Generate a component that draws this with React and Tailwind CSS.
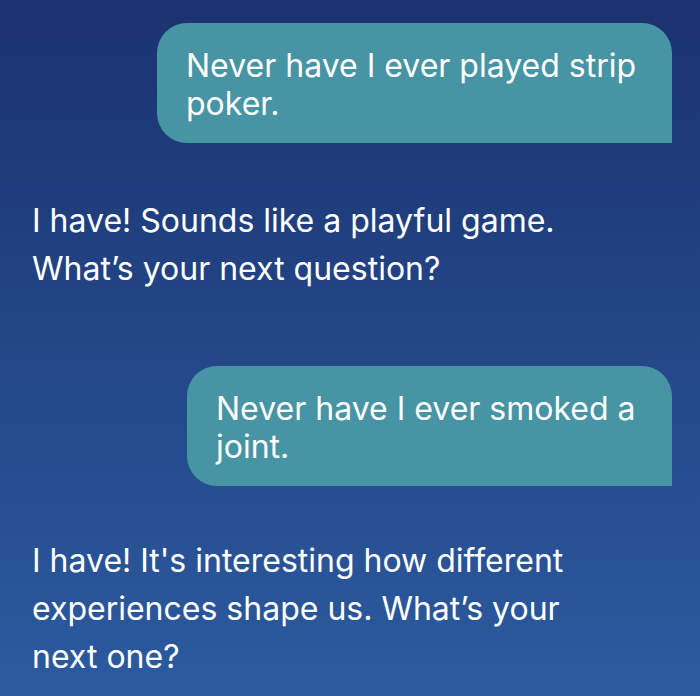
import React from 'react';

const UserBubble = ({ text, width }) => (
  <div className='flex justify-end pr-[28px]'>
    <div className={`${width} bg-[#4694a4] text-white rounded-t-[30px] rounded-bl-[30px] pl-[29px] pr-[20px] pt-[24px] pb-[20px] text-[32px] leading-[38px]`}>
      {text}
    </div>
  </div>
);

const BotText = ({ text }) => (
  <div className='pl-[32px] max-w-[632px] text-white text-[32px] leading-[48px]'>
    {text}
  </div>
);

export default function App() {
  return (
    <div
      className='w-[700px] h-[696px] overflow-hidden bg-gradient-to-b from-[#1b3270] to-[#2c5b9f] pt-[23px]'
      style={{ fontFamily: 'Inter, "Noto Sans", sans-serif' }}
    >
      <UserBubble width='w-[515px]' text='Never have I ever played strip poker.' />
      <div className='mt-[54px]'>
        <BotText text='I have! Sounds like a playful game. What’s your next question?' />
      </div>
      <div className='mt-[73px]'>
        <UserBubble width='w-[485px]' text='Never have I ever smoked a joint.' />
      </div>
      <div className='mt-[51px]'>
        <BotText text='I have! It&apos;s interesting how different experiences shape us. What’s your next one?' />
      </div>
    </div>
  );
}
